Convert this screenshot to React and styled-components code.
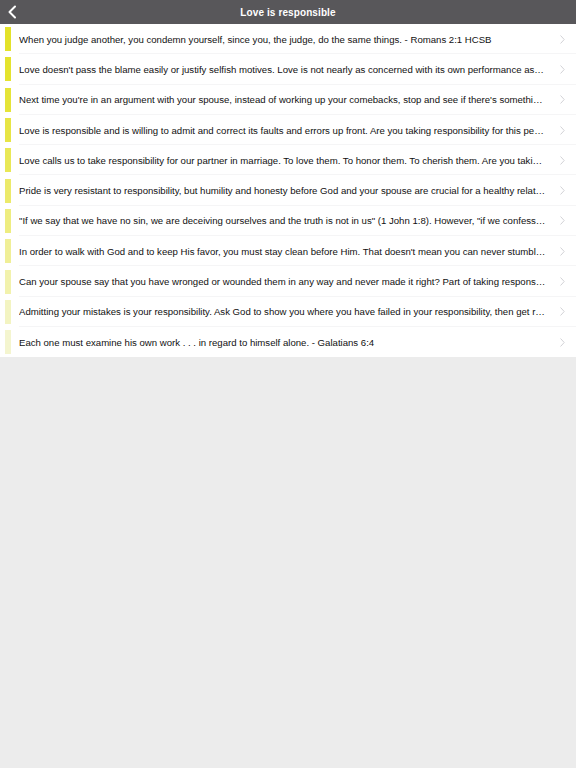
import React from 'react';
import styled, { createGlobalStyle } from 'styled-components';

const GlobalStyle = createGlobalStyle`
  html, body {
    margin: 0;
    padding: 0;
    background: #ececec;
    font-family: 'Liberation Sans', Arial, sans-serif;
  }
`;

const Page = styled.div`
  width: 576px;
  min-height: 768px;
  background: #ececec;
`;

const NavBar = styled.div`
  height: 24px;
  background: #58575a;
  display: flex;
  align-items: center;
  justify-content: center;
  position: relative;
`;

const BackButton = styled.button`
  position: absolute;
  left: 4px;
  top: 4px;
  width: 16px;
  height: 16px;
  border: none;
  background: none;
  padding: 0;
  display: flex;
  align-items: center;
  justify-content: center;
`;

const Title = styled.div`
  color: #ffffff;
  font-size: 10px;
  font-weight: bold;
  letter-spacing: 0.1px;
`;

const List = styled.div`
  background: #ffffff;
`;

const Row = styled.div`
  height: 30.3px;
  box-sizing: border-box;
  display: flex;
  align-items: center;
  position: relative;
  &:not(:last-child)::after {
    content: '';
    position: absolute;
    left: 19px;
    right: 0;
    bottom: 0;
    height: 1px;
    background: #f5f5f6;
  }
`;

const Bar = styled.div`
  width: 6px;
  height: 24px;
  margin-left: 5px;
  margin-right: 8px;
  flex-shrink: 0;
  background: ${(p) => p.$color};
`;

const Text = styled.div`
  flex: 1;
  min-width: 0;
  font-size: 9.6px;
  color: #111111;
  white-space: nowrap;
  overflow: hidden;
  text-overflow: ellipsis;
`;

const Chevron = styled.div`
  width: 28px;
  flex-shrink: 0;
  display: flex;
  justify-content: center;
  padding-left: 2px;
`;

const items = [
  'When you judge another, you condemn yourself, since you, the judge, do the same things. - Romans 2:1 HCSB',
  "Love doesn't pass the blame easily or justify selfish motives. Love is not nearly as concerned with its own performance as it is with the other person.",
  "Next time you're in an argument with your spouse, instead of working up your comebacks, stop and see if there's something you need to own.",
  'Love is responsible and is willing to admit and correct its faults and errors up front. Are you taking responsibility for this period of your life?',
  'Love calls us to take responsibility for our partner in marriage. To love them. To honor them. To cherish them. Are you taking that seriously?',
  'Pride is very resistant to responsibility, but humility and honesty before God and your spouse are crucial for a healthy relationship.',
  '"If we say that we have no sin, we are deceiving ourselves and the truth is not in us" (1 John 1:8). However, "if we confess our sins, He is faithful."',
  "In order to walk with God and to keep His favor, you must stay clean before Him. That doesn't mean you can never stumble or fall.",
  'Can your spouse say that you have wronged or wounded them in any way and never made it right? Part of taking responsibility is asking forgiveness.',
  'Admitting your mistakes is your responsibility. Ask God to show you where you have failed in your responsibility, then get right with Him.',
  'Each one must examine his own work . . . in regard to himself alone. - Galatians 6:4',
];

const barColors = [
  '#e3e22a',
  '#e4e32e',
  '#e5e438',
  '#e7e545',
  '#e9e856',
  '#ecea6a',
  '#eeed80',
  '#f0ef97',
  '#f2f2ad',
  '#f3f4c2',
  '#f4f5cf',
];

const App = () => (
  <>
    <GlobalStyle />
    <Page>
      <NavBar>
        <BackButton>
          <svg width="10" height="14" viewBox="0 0 10 14">
            <path d="M8 1.5 L2.5 7 L8 12.5" fill="none" stroke="#ffffff" strokeWidth="2" strokeLinecap="round" strokeLinejoin="round" />
          </svg>
        </BackButton>
        <Title>Love is responsible</Title>
      </NavBar>
      <List>
        {items.map((t, i) => (
          <Row key={i}>
            <Bar $color={barColors[i]} />
            <Text>{t}</Text>
            <Chevron>
              <svg width="5" height="9" viewBox="0 0 5 9">
                <path d="M0.8 0.8 L4.2 4.5 L0.8 8.2" fill="none" stroke="#d2d2d6" strokeWidth="1" strokeLinecap="round" strokeLinejoin="round" />
              </svg>
            </Chevron>
          </Row>
        ))}
      </List>
    </Page>
  </>
);

export default App;
